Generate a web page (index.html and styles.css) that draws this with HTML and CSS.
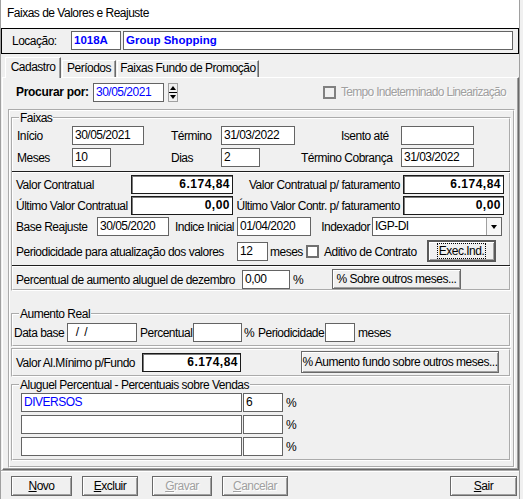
FILE: index.html
```html
<!DOCTYPE html>
<html lang="pt-BR">
<head>
  <meta charset="UTF-8" />
  <title>Faixas de Valores e Reajuste</title>
  <link rel="stylesheet" href="styles.css">
</head>
<body>
  <div class="janela">
    <div class="titulo">Faixas de Valores e Reajuste</div>

    <div class="locacao">
      <span class="loc-lbl">Locação:</span>
      <span class="ed forte azul loc-cod">1018A</span>
      <span class="ed forte azul loc-nome">Group Shopping</span>
    </div>

    <div class="abas">
      <div class="aba ativa">Cadastro</div>
      <div class="aba aba-per">Períodos</div>
      <div class="aba aba-fundo">Faixas Fundo de Promoção</div>
    </div>

    <div class="pagina">
      <div class="procurar">
        <span class="proc-lbl">Procurar por:</span>
        <span class="ed azul proc-data">30/05/2021</span>
        <span class="spin"><span class="spin-up"></span><span class="spin-dn"></span></span>
        <span class="chk chk-off"></span>
        <span class="desab tempo">Tempo Indeterminado Linearização</span>
      </div>

      <div class="painel">
        <fieldset class="grupo">
          <legend>Faixas</legend>
          <div class="row r-inicio">
            <span class="lbl l-col1">Início</span>
            <span class="ed w72">30/05/2021</span>
            <span class="lbl l-termino">Término</span>
            <span class="ed w74">31/03/2022</span>
            <span class="lbl l-isento">Isento até</span>
            <span class="ed w73"></span>
          </div>
          <div class="row r-meses">
            <span class="lbl l-col1">Meses</span>
            <span class="ed w39">10</span>
            <span class="lbl l-dias">Dias</span>
            <span class="ed w39">2</span>
            <span class="lbl l-tcob">Término Cobrança</span>
            <span class="ed w73">31/03/2022</span>
          </div>
          <div class="sep sep1"></div>
          <div class="row r-valor">
            <span class="lbl l-valor">Valor Contratual</span>
            <span class="ed num w102">6.174,84</span>
            <span class="lbl dir l-fat">Valor Contratual p/ faturamento</span>
            <span class="ed num w101">6.174,84</span>
          </div>
          <div class="row r-ultimo">
            <span class="lbl l-valor">Último Valor Contratual</span>
            <span class="ed num w102">0,00</span>
            <span class="lbl dir l-fat">Último Valor Contr. p/ faturamento</span>
            <span class="ed num w101">0,00</span>
          </div>
          <div class="row r-base">
            <span class="lbl l-base">Base Reajuste</span>
            <span class="ed w72">30/05/2020</span>
            <span class="lbl dir l-indice">Indice Inicial</span>
            <span class="ed w74">01/04/2020</span>
            <span class="lbl dir l-indexador">Indexador</span>
            <span class="ed combo"><span class="combo-txt">IGP-DI</span><span class="combo-btn"></span></span>
          </div>
          <div class="row alta r-period">
            <span class="lbl l-period">Periodicidade para atualização dos valores</span>
            <span class="ed w31">12</span>
            <span class="lbl l-meses">meses</span>
            <span class="chk"></span>
            <span class="lbl l-aditivo">Aditivo de Contrato</span>
            <span class="btn exec"><span>Exec.Ind.</span></span>
          </div>
          <div class="sep sep2"></div>
          <div class="row media r-dez">
            <span class="lbl l-dez">Percentual de aumento aluguel de dezembro</span>
            <span class="ed w48">0,00</span>
            <span class="lbl l-pct">%</span>
            <span class="btn b-sobre">% Sobre outros meses...</span>
          </div>
        </fieldset>

        <fieldset class="grupo aumento">
          <legend>Aumento Real</legend>
          <div class="row r-aumento">
            <span class="lbl l-database">Data base</span>
            <span class="ed w70">&nbsp;&nbsp;/&nbsp;&nbsp;/</span>
            <span class="lbl l-perc">Percentual</span>
            <span class="ed w49"></span>
            <span class="lbl l-pct2">%</span>
            <span class="lbl l-periodic">Periodicidade</span>
            <span class="ed w30"></span>
            <span class="lbl l-meses2">meses</span>
          </div>
        </fieldset>

        <div class="fundo">
          <div class="row alta">
            <span class="lbl l-minimo">Valor Al.Mínimo p/Fundo</span>
            <span class="ed num w99">6.174,84</span>
            <span class="btn b-fundo">% Aumento fundo sobre outros meses...</span>
          </div>
        </div>

        <fieldset class="grupo aluguel">
          <legend>Aluguel Percentual - Percentuais sobre Vendas</legend>
          <div class="row r-alug">
            <span class="ed azul w221">DIVERSOS</span>
            <span class="ed w40">6</span>
            <span class="lbl l-pct3">%</span>
          </div>
          <div class="row r-alug">
            <span class="ed w221"></span>
            <span class="ed w40"></span>
            <span class="lbl l-pct3">%</span>
          </div>
          <div class="row r-alug">
            <span class="ed w221"></span>
            <span class="ed w40"></span>
            <span class="lbl l-pct3">%</span>
          </div>
        </fieldset>
      </div>
    </div>

    <div class="botoes">
      <span class="btn b-novo"><u>N</u>ovo</span>
      <span class="btn b-excluir"><u>E</u>xcluir</span>
      <span class="btn desab b-gravar"><u>G</u>ravar</span>
      <span class="btn desab b-cancelar"><u>C</u>ancelar</span>
      <span class="btn b-sair"><u>S</u>air</span>
    </div>
  </div>
</body>
</html>
```

FILE: styles.css
```css
* { box-sizing: border-box; }
body { margin: 0; background: #f0f0f0; color: #000; font-family: "Liberation Sans", Arial, sans-serif; font-size: 12px; letter-spacing: -0.5px; line-height: 15px; }
.janela { width: 520px; height: 499px; border-left: 1px solid #a0a0a0; border-right: 1px solid #a0a0a0; }
.titulo { height: 28px; line-height: 27px; padding-left: 6px; background: #fff; }

/* campos */
.ed { display: block; flex: none; height: 19px; padding: 0 2px; line-height: 17px; background: #fff; border: 1px solid #646464; white-space: nowrap; overflow: hidden; }
.azul { color: #0000ff; }
.forte { font-weight: bold; font-size: 11.5px; letter-spacing: 0; }
.num { font-weight: bold; letter-spacing: 0.5px; text-align: right; border-color: #1a1a1a; box-shadow: inset 1px 1px 0 #7a7a7a; }

.locacao { display: flex; height: 26px; padding: 2px 0 0 10px; border: 1px solid #000; }
.loc-lbl { width: 59px; line-height: 21px; }
.loc-cod { width: 50px; }
.loc-nome { width: 390px; margin-left: 2px; }

/* abas */
.abas { display: flex; align-items: flex-end; height: 23px; padding-left: 4px; }
.aba { height: 17px; margin-left: 1px; text-align: center; white-space: nowrap; border-top: 1px solid #fff; border-left: 1px solid #fff; border-right: 1px solid #696969; box-shadow: inset -1px 0 0 #a0a0a0; }
.ativa { position: relative; z-index: 1; width: 56px; height: 21px; margin: 0 0 -1px 0; padding-top: 2px; background: #f0f0f0; }
.aba-per { width: 54px; }
.aba-fundo { width: 142px; }

.pagina { width: 517px; height: 393px; margin-left: 1px; border: 1px solid; border-color: #fff #696969 #696969 #fff; box-shadow: inset -1px -1px 0 #a0a0a0; }

.procurar { display: flex; align-items: center; height: 19px; margin-top: 5px; }
.proc-lbl { width: 77px; margin-left: 13px; font-weight: bold; letter-spacing: -0.3px; white-space: nowrap; }
.proc-data { width: 71px; }
.spin { flex: none; display: flex; flex-direction: column; width: 10px; height: 19px; margin-left: 4px; border: 1px solid #a0a0a0; background: #f0f0f0; }
.spin-up, .spin-dn { flex: 1; display: flex; align-items: center; justify-content: center; }
.spin-dn { border-top: 1px solid #000; }
.spin-up::after { content: ""; border-left: 3px solid transparent; border-right: 3px solid transparent; border-bottom: 4px solid #000; }
.spin-dn::after { content: ""; border-left: 3px solid transparent; border-right: 3px solid transparent; border-top: 4px solid #000; }

.chk { flex: none; width: 13px; height: 13px; border: 2px solid #707070; background: #fff; }
.chk-off { margin-left: 145px; border-color: #808080; background: #f0f0f0; }
.desab { color: #a0a0a0; text-shadow: 1px 1px 0 #fff; }
.tempo { margin-left: 5px; letter-spacing: -0.7px; white-space: nowrap; }

/* grupos */
.painel { width: 507px; height: 359px; margin: 7px 0 0 5px; padding: 1px 0 0 1px; border: 2px groove #fff; }
.grupo { display: block; width: 500px; margin: 0; padding: 0; border: 2px groove #fff; }
.grupo legend { margin-left: 6px; padding: 0 1px; line-height: 12px; white-space: nowrap; }
.aumento { margin-top: 17px; padding-bottom: 3px; }
.fundo { width: 500px; height: 29px; margin-top: 1px; padding-top: 1px; border: 2px groove #fff; }
.aluguel { margin-top: 2px; padding-bottom: 3px; }

.row { display: flex; align-items: center; height: 19px; }
.alta { height: 22px; }
.media { height: 20px; }
.lbl { flex: none; white-space: nowrap; margin-top: 2px; }
.dir { text-align: right; }
.sep { height: 2px; margin: 0 -1px; border-top: 1px solid #1e1e1e; border-bottom: 1px solid #fff; }

.r-inicio { margin-top: 2px; }
.r-meses { margin-top: 3px; }
.sep1 { margin-top: 4px; }
.r-valor { margin-top: 2px; }
.r-ultimo { margin-top: 2px; }
.r-base { margin-top: 2px; }
.r-period { margin-top: 4px; }
.sep2 { margin-top: 3px; }
.r-dez { margin-top: 2px; }
.r-aumento { margin-top: 3px; }
.r-alug { margin-top: 3px; }
.r-alug:first-of-type { margin-top: 2px; }

.w30 { width: 30px; }
.w31 { width: 31px; }
.w39 { width: 39px; }
.w40 { width: 40px; margin-left: 1px; }
.w48 { width: 48px; }
.w49 { width: 49px; }
.w70 { width: 70px; }
.w72 { width: 72px; }
.w73 { width: 73px; }
.w74 { width: 74px; }
.w99 { width: 99px; }
.w101 { width: 101px; }
.w102 { width: 102px; }
.w221 { width: 221px; margin-left: 8px; }

.l-col1 { width: 55px; margin-left: 4px; }
.l-termino { width: 50px; margin-left: 27px; }
.l-isento { width: 60px; margin-left: 46px; }
.l-dias { width: 50px; margin-left: 60px; }
.l-tcob { width: 100px; margin-left: 41px; }
.l-valor { width: 115px; margin-left: 3px; }
.l-fat { width: 170px; padding-right: 3px; }
.l-base { width: 81px; margin-left: 3px; }
.l-indice { width: 68px; padding-right: 3px; }
.l-indexador { width: 61px; padding-right: 2px; }
.l-period { width: 221px; margin-left: 3px; }
.l-meses { width: 36px; margin-left: 2px; }
.l-aditivo { width: 103px; margin-left: 5px; }
.l-dez { width: 226px; margin-left: 3px; }
.l-pct { width: 39px; margin-left: 3px; }
.l-database { width: 53px; margin-left: 1px; }
.l-perc { width: 53px; margin-left: 3px; }
.l-pct2 { width: 14px; margin-left: 2px; }
.l-periodic { width: 67px; }
.l-meses2 { margin-left: 3px; }
.l-minimo { width: 126px; margin-left: 3px; }
.l-pct3 { margin-left: 3px; }

.combo { display: flex; width: 130px; padding: 0 0 0 2px; }
.combo-txt { flex: 1; }
.combo-btn { flex: none; width: 15px; height: 17px; display: flex; align-items: center; justify-content: center; border-left: 1px solid #a0a0a0; background: #f7f7f7; }
.combo-btn::after { content: ""; border-left: 3px solid transparent; border-right: 3px solid transparent; border-top: 4px solid #000; }

/* botões */
.btn { flex: none; display: flex; align-items: center; justify-content: center; height: 20px; background: #f0f0f0; border: 1px solid #696969; box-shadow: inset 1px 1px 0 #fff, inset -1px -1px 0 #a0a0a0; white-space: nowrap; }
.exec { width: 69px; height: 22px; border: 2px solid #5a5a5a; }
.exec span { border: 1px dotted #000; padding: 0 1px; line-height: 14px; }
.b-sobre { width: 129px; }
.b-fundo { width: 198px; height: 22px; margin-left: 60px; }

.botoes { display: flex; align-items: flex-start; height: 29px; padding-top: 4px; border-top: 2px groove #fff; }
.b-novo { width: 61px; margin-left: 10px; }
.b-excluir { width: 56px; margin-left: 10px; }
.b-gravar { width: 60px; margin-left: 14px; }
.b-cancelar { width: 66px; margin-left: 10px; }
.b-sair { width: 67px; margin-left: auto; margin-right: 2px; }
```
